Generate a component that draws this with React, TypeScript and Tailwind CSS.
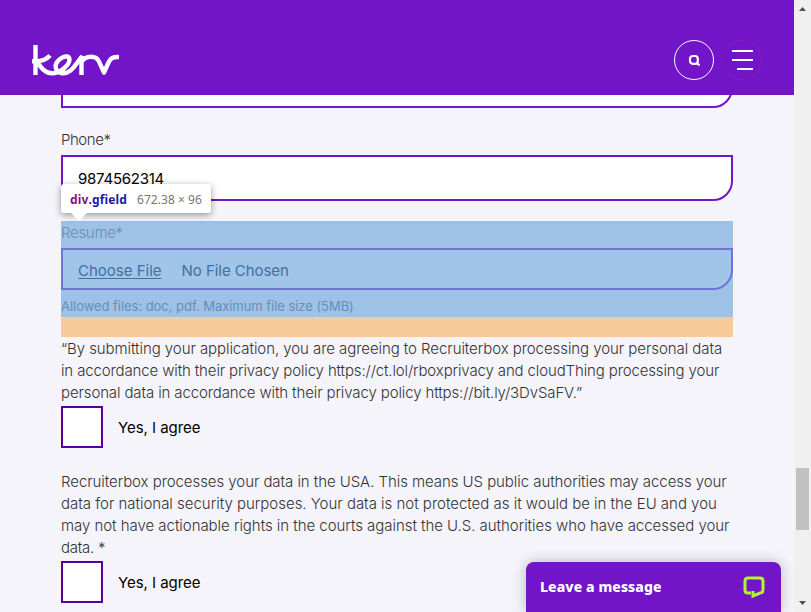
import React from "react";

type LineProps = { text: string; className?: string };

function Line({ text, className = "" }: LineProps) {
  return (
    <span className="block h-[22px] whitespace-nowrap">
      <span className={className}>{text}</span>
    </span>
  );
}

function Logo() {
  return (
    <svg className="ml-8 mt-11 h-8 w-[88px]" viewBox="0 0 88 32" fill="none" stroke="#fff" strokeWidth="4.4" strokeLinejoin="round">
      <path d="M3.500 1V31M0 17.300C8 18 14 16 18 11.500M5 17.500C8 22 12 29.300 20 29.300C28 29.300 37.500 21 37.500 15.500C37.500 12 33 11.500 29.500 14C24 17.500 22 22 25 26.500C28 30.500 34 30 38.500 26.500C44 22 46 16.500 50.500 12" />
      <path d="M49.500 12V31M49.500 18C52 14 55 12.800 59 12.800C63.500 12.800 65.500 14 67 17.500L72 28.500L76.500 18.500C78.500 14 81 12.800 87 13" />
    </svg>
  );
}

function Header() {
  return (
    <header className="flex h-[95px] w-[794px] shrink-0 bg-[#7214c8]">
      <Logo />
      <div className="ml-auto mr-8 mt-10 flex gap-2">
        <button className="flex size-10 items-center justify-center rounded-full border border-white">
          <svg className="size-3" viewBox="0 0 12 12" fill="none" stroke="#fff" strokeWidth="2.2">
            <rect x="2" y="2" width="7.800" height="7.800" rx="2.800" />
            <path d="M8.500 8.500L11.500 11.500" />
          </svg>
        </button>
        <button className="flex size-10 flex-col items-end justify-center gap-[7px] rounded-full border border-[#8b18b4] pr-[8px]">
          <span className="h-0.5 w-[21px] bg-white" />
          <span className="h-0.5 w-[21px] bg-white" />
          <span className="h-0.5 w-4 bg-white" />
        </button>
      </div>
    </header>
  );
}

function Agree() {
  return (
    <label className="flex h-[42px] items-center gap-[15px] text-[15px] text-black">
      <span className="size-[42px] border-2 border-[#56009b] bg-white" />
      <span className="pt-0.5 font-normal tracking-[-0.05px]">Yes, I agree</span>
    </label>
  );
}

function Tooltip() {
  return (
    <div className="absolute left-0 top-[29px] flex h-[29px] w-[150px] items-center rounded-[3px] bg-white pl-[9px] pt-0.5 font-['Noto_Sans',sans-serif] text-[12px] shadow-[0_2px_7px_rgba(0,0,0,0.4)]">
      <b className="font-bold tracking-[0.15px] text-[#881280]">div</b>
      <b className="font-bold tracking-[0.15px] text-[#1a1aa6]">.gfield</b>
      <span className="ml-[10px] tracking-[0.04px] text-[#777]">672.38 × 96</span>
      <svg className="absolute left-[10px] top-[29px] h-2 w-4" viewBox="0 0 16 8">
        <path d="M0 0H16L8 8Z" fill="#fff" />
      </svg>
    </div>
  );
}

function Chat() {
  return (
    <div className="absolute bottom-0 left-[526px] flex h-[50px] w-[255px] items-center justify-between rounded-t-lg bg-[#7214c8] pl-[14px] pr-4 shadow-[0_0_14px_rgba(0,0,0,0.25)]">
      <span className="font-['Noto_Sans',sans-serif] text-[14px] font-extrabold tracking-[0.1px] text-white">Leave a message</span>
      <svg className="size-[22px]" viewBox="0 0 22 22" fill="none" stroke="#b4f52c" strokeWidth="3">
        <path d="M8 17H5Q2 17 2 14V5Q2 2 5 2H17Q20 2 20 5V14Q20 17 17 17L10 20V15" />
      </svg>
    </div>
  );
}

export default function App() {
  return (
    <div className="relative flex h-[612px] w-[811px] overflow-hidden bg-[#f5f4fa] font-['Inter','Liberation_Sans',sans-serif] text-[15px] font-light leading-[22px] text-[#333]">
      <div className="flex w-[794px] flex-col">
        <Header />
        <main className="ml-[61px] w-[672px]">
          <div className="h-[13px] overflow-hidden">
            <div className="-mt-[33px] h-[46px] rounded-br-[20px] border-2 border-[#7214c8] bg-white" />
          </div>
          <div className="mt-[21px] h-[26px]"><Line text="Phone*" className="tracking-[-0.45px]" /></div>
          <div className="relative h-[46px] rounded-br-[20px] border-2 border-[#7214c8] bg-white pl-[15px] pt-[11px] font-normal text-black">
            <Line text="9874562314" className="tracking-[-0.25px]" />
            <div className="absolute -left-0.5 -top-0.5 z-10 font-normal"><Tooltip /></div>
          </div>
          <section className="mt-5 h-24 bg-[#9ec1e6] text-[#668fb9]">
            <div className="h-[27px] pt-px"><Line text="Resume*" className="tracking-[-0.3px]" /></div>
            <div className="flex h-[42px] items-center gap-5 rounded-br-[20px] border-2 border-[#7074da] bg-[#a1c4e9] pl-[15px] pt-1 font-normal text-[#42709f]">
              <span className="underline underline-offset-2">Choose File</span>
              <span className="tracking-[-0.05px]">No File Chosen</span>
            </div>
            <p className="pt-[5px] text-[13px] font-normal tracking-[-0.045px]">Allowed files: doc, pdf. Maximum file size (5MB)</p>
          </section>
          <div className="h-5 bg-[#f6ca9a]" />
          <div className="mt-px">
            <Line text="“By submitting your application, you are agreeing to Recruiterbox processing your personal data" className="tracking-[-0.065px]" />
            <Line text="in accordance with their privacy policy https://ct.lol/rboxprivacy and cloudThing processing your" className="tracking-[-0.13px]" />
            <Line text="personal data in accordance with their privacy policy https://bit.ly/3DvSaFV.”" className="tracking-[-0.12px]" />
          </div>
          <div className="mt-[2px]"><Agree /></div>
          <div className="mt-[23px]">
            <Line text="Recruiterbox processes your data in the USA. This means US public authorities may access your" className="tracking-[-0.062px]" />
            <Line text="data for national security purposes. Your data is not protected as it would be in the EU and you" className="tracking-[-0.015px]" />
            <Line text="may not have actionable rights in the courts against the U.S. authorities who have accessed your" className="tracking-[-0.04px]" />
            <Line text="data. *" className="tracking-[-0.25px]" />
          </div>
          <div className="mt-[2px]"><Agree /></div>
        </main>
      </div>
      <aside className="flex w-[17px] flex-col items-center bg-[#f0f0f0]">
        <svg className="mt-[7px] h-1 w-[7px]" viewBox="0 0 7 4"><path d="M0 4L3.500 0L7 4Z" fill="#505050" /></svg>
        <div className="mt-[457px] h-[62px] w-[13px] bg-[#c1c1c1]" />
        <svg className="mt-[71px] h-1 w-[7px]" viewBox="0 0 7 4"><path d="M0 0L3.500 4L7 0Z" fill="#505050" /></svg>
      </aside>
      <Chat />
    </div>
  );
}
